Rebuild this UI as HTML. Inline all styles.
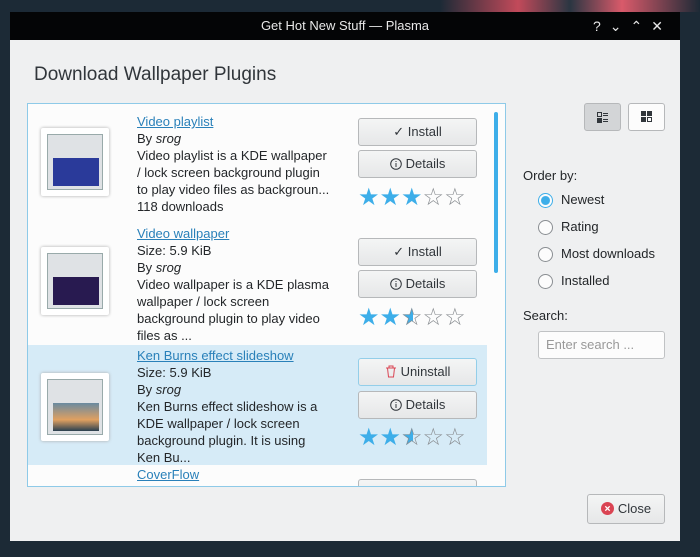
<!DOCTYPE html>
<html><head><meta charset="utf-8"><style>
*{box-sizing:border-box;margin:0;padding:0}
body{width:700px;height:557px;overflow:hidden;background:#1c2a36;font-family:"Liberation Sans",sans-serif;font-size:13px;color:#232629;position:relative}
.bgs{position:absolute;left:440px;top:0;width:260px;height:12px;background:linear-gradient(90deg,#1c2a36,#c24a5a 30%,#2a3642 50%,#d95a6a 70%,#1c2a36)}
.win{position:absolute;left:10px;top:12px;width:670px;height:529px;background:#eff0f1}
.tb{height:28px;background:#040506;color:#e8e8e8;text-align:center;line-height:28px;font-size:13px;position:relative}
.tb .ctl{position:absolute;right:8px;top:0;font-size:14px;letter-spacing:9px}
.h{position:absolute;left:24px;top:52px;font-size:19px;color:#31363b}
.list{position:absolute;left:17px;top:91px;width:479px;height:384px;background:#fcfcfc;border:1px solid #8ecae8;overflow:hidden}
.sb{position:absolute;left:466px;top:8px;width:4px;height:161px;background:#3daee9;border-radius:2px}
.it{position:absolute;left:0;width:459px}
.th{position:absolute;left:13px;width:68px;height:68px;background:#fff;box-shadow:0 0 3px #aaa;border-radius:2px}
.th .s{position:absolute;left:6px;top:6px;width:56px;height:56px;background:#dfe2e5;border:1px solid #9aa}
.th .p{position:absolute;left:12px;top:30px;width:46px;height:28px;background:#1a2560}
.tx{position:absolute;left:109px;line-height:17px}
.tx a{color:#2980b9;text-decoration:underline}
.btn{position:absolute;left:330px;width:119px;height:28px;border:1px solid #b6b8ba;border-radius:3px;background:linear-gradient(#f4f5f5,#e6e7e8);text-align:center;line-height:26px;color:#31363b}
.btn svg{vertical-align:-2px;margin-right:4px}
.st{position:absolute;left:330px;font-size:24px;letter-spacing:0;line-height:24px}
.st .f{color:#3daee9}.st .e{color:#8a8e92}
.vb{position:absolute;top:91px;width:37px;height:28px;border:1px solid #b6b8ba;border-radius:3px;background:#fcfcfc}
.r{position:absolute;left:528px;height:16px;line-height:16px}
.r i{position:absolute;left:0;top:1px;width:15px;height:15px;border:1px solid #8a8e92;border-radius:50%;background:#fcfcfc}
.r span{position:absolute;left:23px;white-space:nowrap}
</style></head><body>
<div class="bgs"></div>
<div class="win">
<div class="tb">Get Hot New Stuff — Plasma<span class="ctl">?⌄⌃✕</span></div>
<div class="h">Download Wallpaper Plugins</div>
<div class="list">
<div class="sb"></div>
<div class="it" style="top:0">
 <div class="th" style="top:24px"><div class="s"></div><div class="p" style="background:#2a3a9a"></div></div>
 <div class="tx" style="top:9px"><a>Video playlist</a><br>By <i>srog</i><br>Video playlist is a KDE wallpaper<br>/ lock screen background plugin<br>to play video files as backgroun...<br>118 downloads</div>
 <div class="btn" style="top:14px">✓ Install</div>
 <div class="btn" style="top:46px"><svg width="12" height="12"><circle cx="6" cy="6" r="5.3" fill="none" stroke="#31363b"/><path d="M6 5v4M6 3v1" stroke="#31363b"/></svg>Details</div>
 <div class="st" style="top:82px"><span class="f">★★★</span><span class="e">☆☆</span></div>
</div>
<div class="it" style="top:112px">
 <div class="th" style="top:31px"><div class="s"></div><div class="p" style="background:#281a50"></div></div>
 <div class="tx" style="top:9px"><a>Video wallpaper</a><br>Size: 5.9 KiB<br>By <i>srog</i><br>Video wallpaper is a KDE plasma<br>wallpaper / lock screen<br>background plugin to play video<br>files as ...</div>
 <div class="btn" style="top:22px">✓ Install</div>
 <div class="btn" style="top:54px"><svg width="12" height="12"><circle cx="6" cy="6" r="5.3" fill="none" stroke="#31363b"/><path d="M6 5v4M6 3v1" stroke="#31363b"/></svg>Details</div>
</div>
<div class="st" style="top:202px"><span class="f">★★</span><span class="f" style="display:inline-block;width:12px;overflow:hidden;vertical-align:top">★</span><span class="e" style="margin-left:-12px">☆</span><span class="e">☆☆</span></div>
<div class="it" style="top:241px;height:120px;background:#d6ebf7">
 <div class="th" style="top:28px"><div class="s"></div><div class="p" style="background:linear-gradient(#6a8aa0,#e0a060 60%,#2a4050)"></div></div>
 <div class="tx" style="top:2px"><a>Ken Burns effect slideshow</a><br>Size: 5.9 KiB<br>By <i>srog</i><br>Ken Burns effect slideshow is a<br>KDE wallpaper / lock screen<br>background plugin. It is using<br>Ken Bu...</div>
 <div class="btn" style="top:13px;border-color:#93cee9"><svg width="12" height="13"><path d="M1 3h10M4 3V1h4v2M2.5 3l1 9h5l1-9" fill="none" stroke="#da4453"/></svg>Uninstall</div>
 <div class="btn" style="top:46px"><svg width="12" height="12"><circle cx="6" cy="6" r="5.3" fill="none" stroke="#31363b"/><path d="M6 5v4M6 3v1" stroke="#31363b"/></svg>Details</div>
</div>
<div class="st" style="top:322px"><span class="f">★★</span><span class="f" style="display:inline-block;width:12px;overflow:hidden;vertical-align:top">★</span><span class="e" style="margin-left:-12px">☆</span><span class="e">☆☆</span></div>
<div class="tx" style="top:362px"><a>CoverFlow</a></div>
<div class="btn" style="top:375px"></div>
</div>
<div class="vb" style="left:574px;background:#d3d5d7"><svg width="35" height="26"><rect x="12.5" y="8.5" width="4" height="4" fill="none" stroke="#31363b"/><rect x="12" y="14" width="5" height="5" fill="#31363b"/><path d="M18 9.5h5M18 11.5h5M18 15.5h5M18 17.5h5" stroke="#31363b"/></svg></div>
<div class="vb" style="left:618px"><svg width="35" height="26"><rect x="12" y="7" width="5" height="5" fill="#31363b"/><rect x="18" y="7" width="5" height="5" fill="#31363b"/><rect x="12" y="13" width="5" height="5" fill="#31363b"/><rect x="18.5" y="13.5" width="4" height="4" fill="none" stroke="#31363b"/></svg></div>
<div style="position:absolute;left:513px;top:156px">Order by:</div>
<div class="r" style="top:180px"><i style="border-color:#3daee9;background:radial-gradient(#3daee9 45%,#fcfcfc 52%)"></i><span>Newest</span></div>
<div class="r" style="top:207px"><i></i><span>Rating</span></div>
<div class="r" style="top:234px"><i></i><span>Most downloads</span></div>
<div class="r" style="top:261px"><i></i><span>Installed</span></div>
<div style="position:absolute;left:513px;top:296px">Search:</div>
<div style="position:absolute;left:528px;top:319px;width:127px;height:28px;background:#fcfcfc;border:1px solid #c0c2c4;border-radius:3px;padding-left:7px;line-height:26px;color:#999">Enter search ...</div>
<div class="btn" style="left:577px;top:482px;width:78px;height:30px;line-height:28px"><svg width="13" height="13"><circle cx="6.5" cy="6.5" r="6.5" fill="#da4453"/><path d="M4.3 4.3l4.4 4.4M8.7 4.3l-4.4 4.4" stroke="#fff" stroke-width="1.3"/></svg>Close</div>
</div>
</body></html>
